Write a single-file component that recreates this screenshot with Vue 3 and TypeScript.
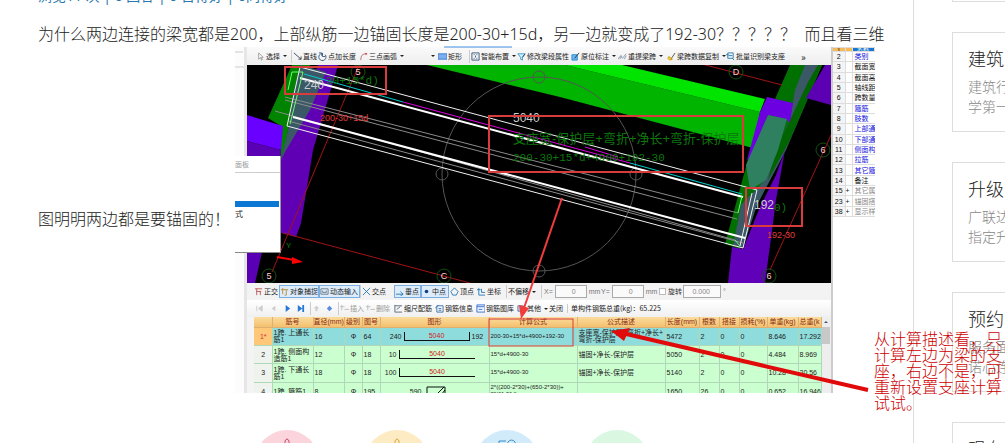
<script setup lang="ts">
interface Shape { d: string; s?: string; f?: string }
interface Tool { icon?: string; label?: string; caret?: boolean; on?: boolean; off?: boolean; sep?: boolean; more?: boolean }
interface Bar { id: string; name: string; dia: string; no: string; left: string; right: string; formula: string; desc: string; nums: string[] }

const icons: Record<string, Shape[]> = {
  cursor: [{ d: 'M3 1v7l2-2 1 3 1-.5L6 6h2z', s: '#999', f: '#fff' }],
  line: [{ d: 'M1 1l8 7', s: '#345' }, { d: 'M6 8h3V5', s: '#345' }],
  circle: [{ d: 'M3 2a4 4 0 1 0 5 1', s: '#357' }, { d: 'M1 1h3v3M5 1v4h3', s: '#357' }],
  arc: [{ d: 'M2 9c0-5 2-7 6-7', s: '#a66' }, { d: 'M7 1h2v2H7z', f: '#c55' }],
  rect: [{ d: 'M0 2h10v6H0z', s: '#357bd0', f: '#7eaef0' }],
  smart: [{ d: 'M1 1h8v8H1zM3 3h1M6 3h1M3 7h1M6 7h1M5 4v2', s: '#357' }],
  edit: [{ d: 'M1 2h8L6 6v3L4 8V6z', s: '#369bd0', f: '#d8f0fb' }, { d: 'M6 6l3-4', s: '#246' }],
  mark: [{ d: 'M1 3h6v6H1z', s: '#278bd0', f: '#68b7ee' }, { d: 'M4 7l5-6', s: '#234' }],
  span: [{ d: 'M0 8l3-4 2 3 4-5M2 8l2-4M7 8l2-4', s: '#89a' }],
  brush: [{ d: 'M2 5l4 3-3 1-2-2z', s: '#c90', f: '#fc3' }, { d: 'M5 7l4-6', s: '#454' }],
  find: [{ d: 'M2 1h6v6H2zM0 3h3M7 7l2 2M3 4h4', s: '#2679ad' }],
  ortho: [{ d: 'M1 2h8M3 2v7M3 5h5M7 5v4', s: '#b55' }],
  snap: [{ d: 'M1 3h8M3 1v7M7 3v6H5', s: '#b78b35' }],
  input: [{ d: 'M1 2h8v6H1zM3 4v2h4V4', s: '#678' }],
  cross: [{ d: 'M1 1l8 8M9 1L1 9', s: '#2679b9' }],
  perp: [{ d: 'M1 8h8M6 5l3 3-3 2', s: '#2679b9' }],
  dot: [{ d: 'M3 5a2 2 0 1 0 4 0a2 2 0 1 0-4 0', f: '#123f88' }],
  vertex: [{ d: 'M5 1l4 4-2 4H3L1 5z', s: '#2679b9' }],
  coord: [{ d: 'M2 1v8h7M5 2v4h4M0 3h4', s: '#2679b9' }],
  first: [{ d: 'M2 2v6M8 2L4 5l4 3z', s: '#ccc', f: '#ccc' }],
  prev: [{ d: 'M7 2L3 5l4 3z', f: '#ccc' }],
  next: [{ d: 'M3 1l5 4-5 4z', f: '#2878d8' }],
  last: [{ d: 'M2 1l5 4-5 4zM7 1h2v8H7z', f: '#2878d8' }],
  up: [{ d: 'M5 2l3 3H6v3H4V5H2z', f: '#ccc' }],
  down: [{ d: 'M5 2l3 3-3 3-3-3z', f: '#5b8be0' }],
  ins: [{ d: 'M0 3h5M2 1v6M5 6h5', s: '#bbb' }],
  scale: [{ d: 'M1 1v8h8M1 2h8M3 6l4-3', s: '#567' }],
  info: [{ d: 'M2 2h7v7H2zM0 5l4-4M4 5h3M4 7h3', s: '#3870ad' }],
  lib: [{ d: 'M1 1h9v8H1z', s: '#3870d0', f: '#eef5ff' }, { d: 'M1 3h8M3 6h4', s: '#3870d0' }],
  other: [{ d: 'M1 2h6v6H1zM4 4h5v5H4z', s: '#579', f: '#cde' }],
}

const drawTools: Tool[] = [
  { icon: 'cursor', label: '选择', caret: true }, { icon: 'line', label: '直线', sep: true }, { icon: 'circle', label: '点加长度' },
  { icon: 'arc', label: '三点画弧', caret: true }, { caret: true }, { icon: 'rect', label: '矩形' },
  { icon: 'smart', label: '智能布置', caret: true, sep: true }, { icon: 'edit', label: '修改梁段属性' },
  { icon: 'mark', label: '原位标注', caret: true }, { icon: 'span', label: '重提梁跨', caret: true },
  { icon: 'brush', label: '梁跨数据复制', caret: true }, { icon: 'find', label: '批量识别梁支座' }, { label: '»', more: true },
]
const snapTools: Tool[] = [
  { icon: 'ortho', label: '正交' }, { icon: 'snap', label: '对象捕捉', on: true }, { icon: 'input', label: '动态输入', on: true },
  { icon: 'cross', label: '交点', sep: true }, { icon: 'perp', label: '垂点', on: true }, { icon: 'dot', label: '中点', on: true },
  { icon: 'vertex', label: '顶点' }, { icon: 'coord', label: '坐标' }, { label: '不偏移', caret: true, sep: true },
]
const barTools: Tool[] = [
  { icon: 'first' }, { icon: 'prev' }, { icon: 'next' }, { icon: 'last' }, { icon: 'up', sep: true }, { icon: 'down' },
  { icon: 'ins', label: '插入', off: true, sep: true }, { icon: 'ins', label: '删除', off: true },
  { icon: 'scale', label: '缩尺配筋' }, { icon: 'info', label: '钢筋信息' }, { icon: 'lib', label: '钢筋图库' },
  { icon: 'other', label: '其他', caret: true }, { label: '关闭' },
]

const props = [
  ['2', '', '类别', 'b'], ['3', '', '截面宽', ''], ['4', '', '截面高', ''], ['5', '', '轴线距', ''], ['6', '', '跨数量', ''],
  ['7', '', '箍筋', 'b'], ['8', '', '肢数', 'b'], ['9', '', '上部通', 'b'], ['10', '', '下部通', 'b'], ['11', '', '侧面构', 'b'],
  ['12', '', '拉筋', 'b'], ['13', '', '其它箍', 'b'], ['14', '', '备注', ''], ['15', '+', '其它属', 'g'], ['23', '+', '锚固搭', 'g'], ['38', '+', '显示样', 'g'],
]

const heads = ['', '筋号', '直径(mm)', '级别', '图号', '图形', '计算公式', '公式描述', '长度(mm)', '根数', '搭接', '损耗(%)', '单重(kg)', '总重(k']
const bars: Bar[] = [
  { id: '1*', name: '1跨. 上通长筋1', dia: '16', no: '64', left: '240', right: '192', formula: '200-30+15*d+4900+192-30', desc: '支座宽-保护层+弯折+净长+\n弯折-保护层', nums: ['5472', '2', '0', '0', '8.646', '17.292'] },
  { id: '2', name: '1跨. 侧面构造筋1', dia: '12', no: '18', left: '10', right: '', formula: '15*d+4900-30', desc: '锚固+净长-保护层', nums: ['5050', '2', '0', '0', '4.484', '8.969'] },
  { id: '3', name: '1跨. 下通长筋1', dia: '18', no: '18', left: '100', right: '', formula: '15*d+4900-30', desc: '锚固+净长-保护层', nums: ['5140', '2', '0', '0', '10.28', '20.56'] },
  { id: '4', name: '1跨. 箍筋1', dia: '8', no: '195', left: '590', right: '', formula: '2*((200-2*30)+(650-2*30))+\n2*(11.9*d)', desc: '', nums: ['1650', '26', '0', '0', '0.652', '16.946'] },
]

const cards = [
  { title: '建筑', lines: ['建筑行', '学第一'] },
  { title: '升级', lines: ['广联达', '指定升'] },
  { title: '预约', lines: ['服务面', '诺心连'] },
  { title: '现在', lines: [] as string[] },
]
const whites = ['M300 67L757 190', 'M287 126L743 248', 'M300 67L287 126', 'M757 190L743 248', 'M752 193L740 246']
const thick = ['M300 78L743 197', 'M293 117L745 238']
const grays = ['M285 97L738 213', 'M285 100L737 219', 'M275 111L735 240', 'M288 121L743 243']
const axes = [['5', 269, 276], ['C', 444, 276], ['6', 769, 276], ['D', 736, 72], ['6', 823, 150], ['5', 358, 72]] as [string, number, number][]
const handles = [[539, 77], [442, 174], [539, 271], [636, 174]]
</script>

<template>
  <div class="page">
    <main class="main">
      <div class="stats"><span>浏览11 次 | 0 回答 | 0 否得好 | 0同得好</span></div>
      <p class="question">为什么两边连接的梁宽都是200，上部纵筋一边锚固长度是200-30+15d，另一边就变成了192-30？？？？？&nbsp; 而且看三维</p>
      <div class="inline-row">
        <span class="note">图明明两边都是要锚固的！</span>
        <div class="shot">
          <div class="edge"></div>
          <div class="app">
            <div class="bar draw">
              <button v-for="(t, i) in drawTools" :key="i" type="button" class="tool" :class="{ sep: t.sep, more: t.more }">
                <svg v-if="t.icon" class="ico" viewBox="0 0 10 10"><path v-for="(p, k) in icons[t.icon]" :key="k" :d="p.d" :stroke="p.s || 'none'" :fill="p.f || 'none'" /></svg>
                <span v-if="t.label">{{ t.label }}</span><i v-if="t.caret" class="caret"></i>
              </button>
            </div>
            <svg class="scene" viewBox="247 65 584 218" preserveAspectRatio="none">
              <rect x="247" y="65" width="584" height="218" fill="#000" />
              <path d="M427 65H565L760 112L753 148L560 97Z" fill="#00b400" />
              <path d="M565 65H622L765 99L760 112Z" fill="#00e400" />
              <path d="M292 65H310L289 125L281 165V126L268 118Z" fill="#008400" />
              <path d="M318 65H338L313 150L307 187L301 223L296 237L281 233V158L300 118Z" fill="#6000b4" />
              <path d="M300 65L326 72L310 110L285 152L281 160L289 125L293 95Z" fill="#3a5866" />
              <path d="M247 115L283 126L281 150L247 141Z" fill="#6a00ff" />
              <path d="M247 141L281 150V233L262 252L255 283H247Z" fill="#5a00b4" />
              <path d="M790 65H818L793 123L768 180L752 200L740 249L725 244L750 152L768 115Z" fill="#007000" />
              <path d="M805 65H822L808 98L786 150L757 205L743 248L733 246L741 205L765 180L790 118L795 90Z" fill="#3a5866" />
              <path d="M808 82L818 65H822L808 98L790 140L768 180L776 150Z" fill="#006400" />
              <path d="M825 65H831V105L806 98Z" fill="#5c00b4" />
              <path d="M767 97L793 103L790 122L785 119L768 115L750 158L747 160L760 112Z" fill="#6c00e0" />
              <path d="M768 115L787 119L778 150L766 180L750 190L746 165Z" fill="#2f8060" />
              <path d="M785 150L776 200L765 283H728L732 247L743 249L760 207L776 175Z" fill="#6000b8" />
              <g fill="none">
                <circle cx="539" cy="174" r="97" stroke="#555" />
                <circle v-for="(h, i) in handles" :key="i" :cx="h[0]" :cy="h[1]" r="6" stroke="#555" />
                <path d="M359 65L272 272M283 233L470 283M675 57L782 85M831 135L770 270" stroke="#a01414" />
                <path v-for="d in grays" :key="d" :d="d" stroke="#8a8a8a" />
                <path v-for="d in whites" :key="d" :d="d" stroke="#f0f0f0" />
                <path v-for="d in thick" :key="d" :d="d" stroke="#fff" stroke-width="2" />
                <path d="M304 74L403 102M630 163L742 194" stroke="#00d0d0" />
                <path d="M403 102L630 163M585 147L618 157" stroke="#e000e0" />
                <path d="M288 90L292 72H303L290 124M738 213L742 196M735 240L740 246" stroke="#6cff6c" />
                <circle v-for="(a, i) in axes" :key="i" :cx="a[1]" :cy="a[2]" r="7" stroke="#145014" />
              </g>
              <text v-for="(a, i) in axes" :key="i" :x="a[1]" :y="a[2] + 3" class="axis">{{ a[0] }}</text>
              <g class="formula">
                <text x="326" y="84" class="code">30+15*d)</text>
                <text x="513" y="143" class="cn">支座宽-保护层+弯折+净长+弯折-保护层</text>
                <text x="513" y="161" class="code">200-30+15*d+4900+192-30</text>
                <text x="774" y="211" class="code">0)</text>
              </g>
              <g class="dims"><text x="304" y="89">240</text><text x="513" y="122">5040</text><text x="754" y="209">192</text></g>
              <g class="reds"><text x="320" y="121">200-30+15d</text><text x="767" y="238">192-30</text></g>
              <path d="M277 257L294 260" stroke="#f00" stroke-width="2" /><path d="M292 257L303 262L292 264Z" fill="#f00" />
              <text x="286" y="248" class="ucs">Y</text>
            </svg>
            <div class="bar snap">
              <button v-for="(t, i) in snapTools" :key="i" type="button" class="tool" :class="{ sep: t.sep, on: t.on }">
                <svg v-if="t.icon" class="ico" viewBox="0 0 10 10"><path v-for="(p, k) in icons[t.icon]" :key="k" :d="p.d" :stroke="p.s || 'none'" :fill="p.f || 'none'" /></svg>
                <span v-if="t.label">{{ t.label }}</span><i v-if="t.caret" class="caret"></i>
              </button>
              <label class="field sep">X=<input type="text" value="0" /><span>mm</span></label>
              <label class="field">Y=<input type="text" value="0" /><span>mm</span></label>
              <label class="field tick"><input type="checkbox" />旋转</label>
              <label class="field wide"><input type="text" value="0.000" aria-label="旋转角度" />°</label>
            </div>
            <div class="bar rebar">
              <button v-for="(t, i) in barTools" :key="i" type="button" class="tool" :class="{ sep: t.sep, off: t.off }">
                <svg v-if="t.icon" class="ico" viewBox="0 0 10 10"><path v-for="(p, k) in icons[t.icon]" :key="k" :d="p.d" :stroke="p.s || 'none'" :fill="p.f || 'none'" /></svg>
                <span v-if="t.label">{{ t.label }}</span><i v-if="t.caret" class="caret"></i>
              </button>
              <span class="total sep">单构件钢筋总重(kg)：65.225</span>
            </div>
            <div class="grid-wrap">
              <table class="bars">
                <colgroup><col v-for="(h, i) in heads" :key="i" :class="'c' + i" /></colgroup>
                <thead><tr><th v-for="(h, i) in heads" :key="i">{{ h }}</th></tr></thead>
                <tbody>
                  <tr v-for="(b, i) in bars" :key="b.id" :class="{ sel: i === 0 }">
                    <th>{{ b.id }}</th>
                    <td><div class="cell">{{ b.name }}</div></td><td>{{ b.dia }}</td><td class="mid">Φ</td><td>{{ b.no }}</td>
                    <td>
                      <div class="figure" :class="{ open: !b.right, hoop: i === 3 }">
                        <span class="lead">{{ b.left }}</span>
                        <svg v-if="i === 3" class="stirrup" viewBox="0 0 20 11"><path d="M1 11V1h18v10M12 7l6-6M15 9l4-5" /></svg>
                        <span v-else class="rod">5040</span>
                        <span v-if="b.right">{{ b.right }}</span>
                      </div>
                    </td>
                    <td class="num"><div class="cell pre">{{ b.formula }}</div></td><td><div class="cell pre">{{ b.desc }}</div></td>
                    <td v-for="(n, k) in b.nums" :key="k">{{ n }}</td>
                  </tr>
                </tbody>
              </table>
              <div class="scroll"><i class="arrow"></i><i class="thumb"></i></div>
            </div>
          </div>
          <div class="side">
            <table class="props">
              <thead><tr><th>1</th><th></th><th class="hl">名称</th></tr></thead>
              <tbody><tr v-for="p in props" :key="p[0]"><th>{{ p[0] }}</th><td>{{ p[1] }}</td><td :class="p[3]">{{ p[2] }}</td></tr></tbody>
            </table>
          </div>
          <div class="panel"><div class="cap">面板</div><div class="pick"></div><div class="opt">式</div></div>
          <svg class="marks" viewBox="235 47 640 346">
            <path d="M444 47H512" stroke="#3c8cdc" />
            <path d="M235 52H243M235 67H244" stroke="#ccc" />
            <g fill="none" stroke="#d83c3c" stroke-width="2">
              <rect x="285" y="67" width="101" height="27" /><rect x="489" y="116" width="254" height="56" />
              <rect x="746" y="188" width="56" height="38" /><rect x="489" y="319" width="84" height="27" stroke-width="1" />
            </g>
            <path d="M562 198L524 308" stroke="#f03c3c" stroke-width="2" /><path d="M521 319L519 305L529 308Z" fill="#f03c3c" />
            <path d="M868 390L622 333" stroke="#e10a0a" stroke-width="4" /><path d="M611 331L630 328L624 341Z" fill="#e10a0a" />
          </svg>
          <p class="remark">从计算描述看，只<br />计算左边为梁的支<br />座，右边不是，可<br />重新设置支座计算<br />试试。</p>
        </div>
      </div>
      <div class="circles">
        <span class="disc pink"><svg viewBox="0 0 64 64"><path d="M30 20V11q2-4 4 0v9" stroke="#c8486a" /></svg></span>
        <span class="disc gold"><svg viewBox="0 0 64 64"><path d="M30 20V11q2-4 4 0v9" stroke="#d8a838" /></svg></span>
        <span class="disc blue"><svg viewBox="0 0 64 64"><path d="M24 20V11h7M33 16a4 4 0 1 1 7 0M26 14h5" stroke="#3a8cc8" /></svg></span>
        <span class="disc green"></span>
      </div>
    </main>
    <aside class="aside">
      <section class="card stub"></section>
      <section v-for="c in cards" :key="c.title" class="card">
        <h3>{{ c.title }}</h3>
        <p v-for="l in c.lines" :key="l">{{ l }}</p>
      </section>
    </aside>
  </div>
</template>

<style>
body { margin: 0; background: #fff; }
</style>

<style scoped>
* { box-sizing: border-box; }
.page { display: flex; height: 100vh; overflow: hidden; font-family: "Noto Sans CJK SC", "Noto Sans", sans-serif; color: #222; }
.main { flex: 1; min-width: 0; padding-left: 38px; border-right: 1px solid #ddd; }
.stats { height: 6px; overflow: hidden; display: flex; align-items: flex-end; font-family: "Noto Sans", "Noto Sans CJK SC", sans-serif; font-size: 14px; line-height: 20px; color: #2a78ad; }
.question { margin: 16px 0 1px; font-family: "Noto Sans", "Noto Sans CJK SC", sans-serif; font-size: 16px; line-height: 24px; font-weight: 300; white-space: nowrap; }
.inline-row { display: flex; align-items: center; gap: 5px; }
.note { font-size: 16px; line-height: 24px; padding-bottom: 4px; font-weight: 300; white-space: nowrap; flex: none; width: 192px; }

.shot { position: relative; flex: none; width: 640px; height: 346px; display: flex; align-items: flex-start; font-size: 7px; line-height: 9px; color: #222; }
.edge { width: 12px; align-self: stretch; background: #fcfcfc; border-right: 3px solid #e6e6e6; }
.app { width: 586px; height: 346px; overflow: hidden; border-right: 2px solid #ccc; display: flex; flex-direction: column; background: #f4f4f4; }
.side { width: 42px; height: 346px; overflow: hidden; background: #fff; }
.bar { display: grid; flex: none; align-items: center; white-space: nowrap; background: linear-gradient(#fafafa, #eee); }
.draw { height: 18px; padding-left: 8px; grid-template-columns: 36px 26px 41px 70px 9px 32px 47px 54px 47px 49px 59px 75px 20px; }
.snap { height: 17px; padding-left: 6px; background: #f3f3f3; grid-template-columns: 26px 40px 41px 34px 27px 28px 27px 30px 35px 58px 58px 24px 44px; }
.rebar { height: 17px; padding-left: 7px; grid-template-columns: 14px 14px 13px 15px 14px 14px 27px 28px 41px 41px 41px 32px 19px 120px; background: linear-gradient(#fff, #f0f0f0); }
.tool { display: flex; align-items: center; gap: 1px; height: 13px; padding: 0 0 0 1px; border: 0; background: none; font: inherit; color: #222; white-space: nowrap; min-width: 0; }
.tool.on { padding: 0; border: 1px solid #7aaee0; background: #dcecfb; }
.tool.off { color: #999; }
.tool.more { font-size: 10px; }
.tool.sep, .field.sep, .total.sep { border-left: 1px solid #ccc; }
.ico { width: 9px; height: 9px; flex: none; }
.caret { flex: none; margin-left: 2px; border: 2px solid transparent; border-top-color: #222; border-bottom: 0; }
.scene { display: block; flex: none; width: 584px; height: 218px; }
.axis { font: 9px "Liberation Sans", sans-serif; fill: #ffd0d0; text-anchor: middle; }
.formula { fill: #0c780c; }
.formula .cn { font: 13px "Liberation Sans", "Noto Sans CJK SC", sans-serif; }
.formula .code { font: 11px "Liberation Mono", monospace; }
.dims { font: 12px "Liberation Sans", sans-serif; fill: #ccc; }
.reds { font: 9px "Liberation Sans", sans-serif; fill: #e03c3c; }
.ucs { font: 8px "Liberation Sans", sans-serif; fill: #0a800a; }
.field { display: flex; align-items: center; gap: 2px; padding-left: 2px; color: #777; font-family: "Liberation Sans", "Noto Sans CJK SC", sans-serif; font-size: 7px; }
.field input[type="text"] { width: 32px; height: 13px; padding: 0 10px 0 0; border: 1px solid #aaa; background: #fafafa; color: #888; font: 7px "Liberation Sans", sans-serif; text-align: right; }
.field.wide input[type="text"] { width: 38px; }
.tick { color: #333; }
.tick input { appearance: none; flex: none; width: 7px; height: 7px; margin: 0; border: 1px solid #bbb; background: #fff; }
.total { padding-left: 3px; }
.grid-wrap { display: flex; height: 76px; padding-left: 7px; overflow: hidden; }
.bars { flex: none; width: 567px; border-collapse: collapse; table-layout: fixed; font-family: "Liberation Sans", "Noto Sans CJK SC", sans-serif; font-size: 7px; line-height: 7px; height: 84px; }
.bars th, .bars td { padding: 0 0 0 1px; border-right: 1px solid #b0d8b8; border-bottom: 1px solid #b0d8b8; text-align: left; vertical-align: middle; white-space: nowrap; overflow: hidden; background: #ccffd0; font-weight: 400; }
.bars thead th { height: 10px; padding: 0; text-align: center; background: linear-gradient(#fbdc9c, #f3c070); border-color: #e0b070; color: #8a2a10; }
.bars tbody tr { height: 18px; }
.bars tbody th { text-align: center; background: #eef3ee; }
.bars .sel td { background: #8fdcdc; }
.bars .sel th { background: #ffc878; color: #c33; }
.bars td.mid { text-align: center; }
.bars .num { font-size: 6px; }
.cell { white-space: normal; word-break: break-all; }
.cell.pre { white-space: pre; }
.c0 { width: 18px; } .c1 { width: 41px; } .c2 { width: 31px; } .c3 { width: 18px; } .c4 { width: 18px; } .c5 { width: 109px; } .c6 { width: 88px; }
.c7 { width: 88px; } .c8 { width: 34px; } .c9 { width: 20px; } .c10 { width: 20px; } .c11 { width: 28px; } .c12 { width: 31px; } .c13 { width: 23px; }
.figure { display: flex; align-items: center; gap: 2px; }
.lead { width: 20px; text-align: right; }
.rod { width: 66px; height: 9px; border: solid #111; border-width: 0 1px 1px 1px; text-align: center; color: #d02020; }
.open .lead { width: 15px; }
.open .rod { width: 76px; border-right: 0; }
.hoop .lead { width: 40px; }
.stirrup { width: 20px; height: 11px; margin-left: 2px; fill: none; stroke: #111; }
.scroll { width: 9px; background: #eee; display: flex; flex-direction: column; align-items: center; }
.arrow { margin: 4px 0; border: 2px solid transparent; border-top: 0; border-bottom-color: #456; }
.thumb { width: 8px; height: 17px; background: #c8c8c8; }
.props { width: 42px; height: 170px; border-collapse: collapse; table-layout: fixed; font-size: 7px; line-height: 9px; }
.props th, .props td { padding: 0; border: 1px solid #ddd; border-left: 0; overflow: hidden; white-space: nowrap; font-weight: 400; text-align: left; color: #111; }
.props th { width: 12px; text-align: center; background: #f4f4f4; font-family: "Liberation Sans", sans-serif; }
.props th:nth-child(2) { width: 7px; }
.props thead th { height: 4px; line-height: 3px; background: #f5b95a; }
.props thead .hl { width: auto; background: #1878d0; color: #fff; font-size: 6px; }
.props td:last-child { padding-left: 2px; border-right: 0; }
.props td.b { color: #1414e0; }
.props td.g { color: #888; }
.panel { position: absolute; left: 0; top: 109px; width: 46px; height: 97px; background: #fff; border-right: 1px solid #999; border-bottom: 1px solid #888; overflow: hidden; }
.cap { height: 17px; line-height: 16px; color: #999; border-bottom: 1px solid #ccc; }
.pick { margin-top: 28px; width: 44px; height: 6px; background: #0c78d4; }
.opt { font-size: 8px; line-height: 14px; }
.marks { position: absolute; left: 0; top: 0; width: 640px; height: 346px; overflow: visible; }
.remark { position: absolute; left: 639px; top: 283px; margin: 0; font-size: 16px; line-height: 16px; font-weight: 300; color: #cc0000; white-space: nowrap; }

.circles { display: flex; gap: 46px; margin: 37px 0 0 217px; }
.disc { width: 64px; height: 64px; border-radius: 50%; flex: none; }
.disc svg { display: block; fill: none; stroke-width: 1; }
.pink { background: #fcd5dc; }
.gold { background: #fdebc4; }
.blue { background: #d2ebfb; }
.green { background: #d9f7e1; }

.aside { flex: none; width: 91px; padding-left: 38px; overflow: hidden; display: flex; flex-direction: column; gap: 30px; }
.card { flex: none; width: 240px; height: 100px; padding: 13px 15px 0; border: 1px solid #ddd; }
.card.stub { height: 2px; padding: 0; border-top: 0; }
.card h3 { margin: 0 0 6px; font-size: 18px; line-height: 24px; font-weight: 300; color: #222; }
.card p { margin: 0; font-size: 14px; line-height: 20px; font-weight: 300; color: #888; white-space: nowrap; }
</style>
